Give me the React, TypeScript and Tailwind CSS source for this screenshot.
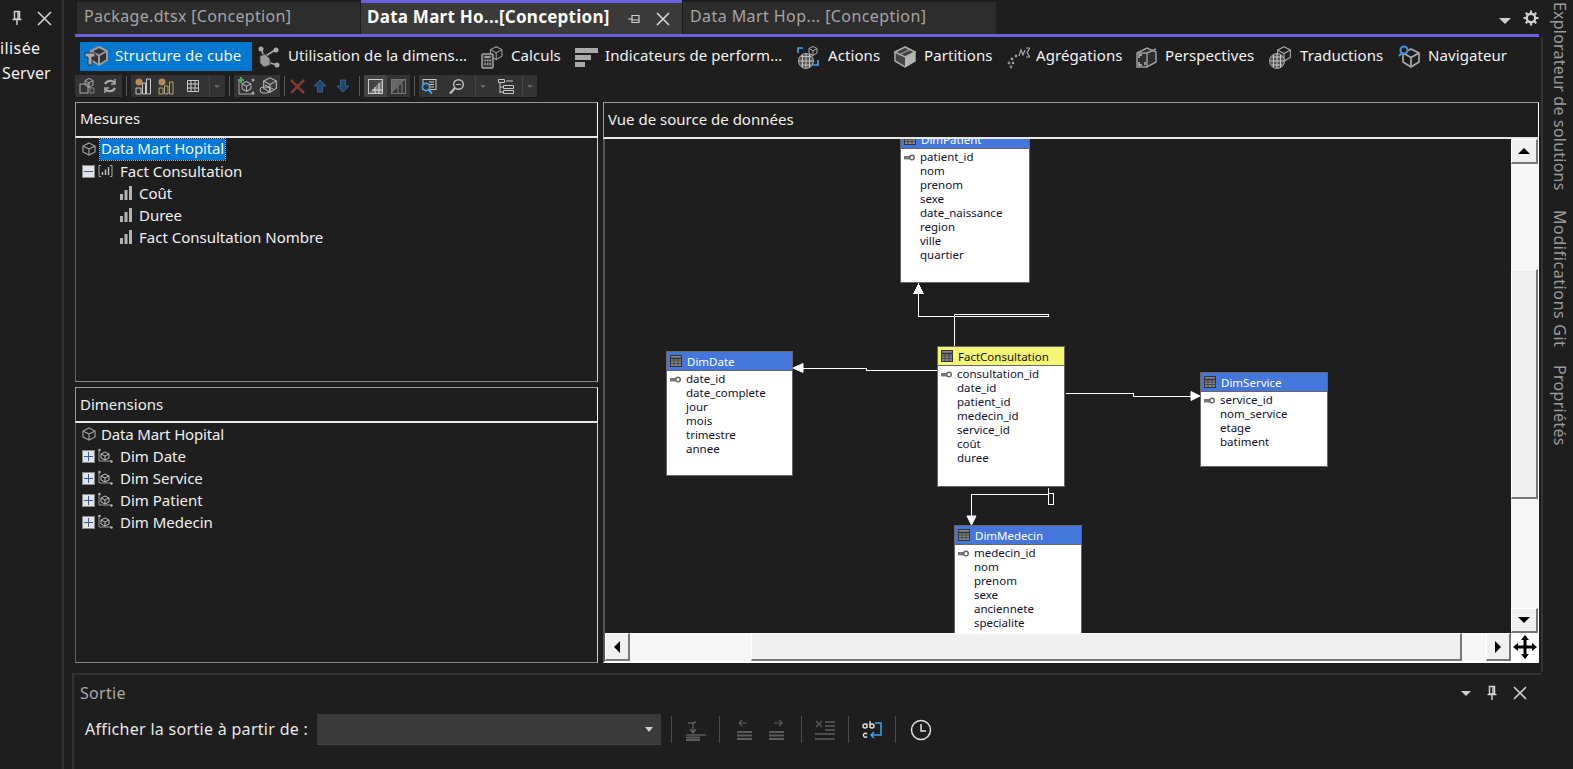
import React from "react";

const ui = "font-['Noto_Sans',sans-serif]";

function S({ w = 24, h = 24, vb, children, className = "" }: { w?: number; h?: number; vb?: string; children: React.ReactNode; className?: string }) {
  return (
    <svg width={w} height={h} viewBox={vb ?? `0 0 ${w} ${h}`} fill="none" className={`shrink-0 ${className}`}>
      {children}
    </svg>
  );
}

const G = "#a9a9a9";

function Cube({ x = 0, y = 0, s = 1, fill = "none", c = G, sw = 1.4 }: { x?: number; y?: number; s?: number; fill?: string; c?: string; sw?: number }) {
  return (
    <g transform={`translate(${x} ${y}) scale(${s})`} stroke={c} strokeWidth={sw} strokeLinejoin="round">
      <path d="M10 1 L18 5 V14 L10 19 L2 14 V5 Z" fill={fill} />
      <path d="M2 5 L10 9.5 L18 5 M10 9.5 V19" />
    </g>
  );
}

const navIcons: React.ReactNode[] = [
  <S key="0">
    <Cube x={5} y={1} s={1} c="#9b9b9b" sw={2} fill="#333" />
    <path d="M1 8 H11 V12 H8 V20 H4 V12 H1 Z" fill="#aaa" stroke="#333" />
  </S>,
  <S key="1">
    <path d="M7 12 L18 5 M10 17 L20 20 M7 12 L4 3" stroke="#aaa" strokeWidth="1.5" />
    <circle cx="4" cy="4" r="2.5" fill="#aaa" />
    <circle cx="19" cy="5" r="2.5" fill="#aaa" />
    <circle cx="20" cy="20" r="2.5" fill="#aaa" />
    <path d="M3 11 L8 9 L13 14 V20 L7 22 L3 18 Z" fill="#9a9a9a" stroke="#444" />
  </S>,
  <S key="2">
    <Cube x={9} y={1} s={0.72} />
    <rect x="2" y="9" width="11" height="14" rx="1" fill="#3a3a3a" stroke="#a5a5a5" strokeWidth="1.5" />
    <path d="M4.5 12 H10.5 M4.5 15.5 H6 M7 15.5 H8.5 M9.5 15.5 H11 M4.5 19 H6 M7 19 H8.5 M9.5 19 H11" stroke="#bbb" strokeWidth="1.4" />
  </S>,
  <S key="3">
    <rect x="1" y="3" width="23" height="5" fill="#aaa" />
    <rect x="1" y="10" width="16" height="5" fill="#aaa" />
    <rect x="1" y="17" width="10" height="5" fill="#aaa" />
  </S>,
  <S key="4">
    <circle cx="10" cy="16" r="7.5" fill="#555" stroke="#aaa" />
    <path d="M3 16 H17 M10 8 V23 M5 11.5 H15 M5 20 H15 M6.5 9.5 V22.5 M13.5 9.5 V22.5" stroke="#c0c0c0" />
    <Cube x={12} y={1} s={0.5} sw={2} />
    <path d="M2 8 V3 H7 M22 15 V20 H17" stroke="#4a9ee8" strokeWidth="1.7" />
  </S>,
  <S key="5">
    <path d="M12 2 L22 7 V16 L12 22 L2 16 V7 Z" fill="#444" stroke="#aaa" strokeWidth="1.5" />
    <path d="M2 7 L12 12 L22 7 L12 2 Z" fill="#444" stroke="#aaa" strokeWidth="1.5" />
    <path d="M12 12 L22 7 V16 L12 22 Z" fill="#b5b5b5" />
    <path d="M7 9.5 L17 4.5" stroke="#aaa" />
  </S>,
  <S key="6">
    <path d="M13 11 L15 5 L17 10 L19 5 M20 3 H24 L21 7.5 L24 12 H20" stroke="#aaa" strokeWidth="1.2" />
    <circle cx="10" cy="11" r="1.4" fill="#999" />
    <circle cx="6" cy="14" r="1.4" fill="#999" />
    <circle cx="3" cy="18" r="1.4" fill="#888" />
    <circle cx="5" cy="22" r="1.4" fill="#888" />
    <circle cx="7" cy="18" r="1.2" fill="#aaa" />
  </S>,
  <S key="7">
    <path d="M3 8 L13 3 L22 7 V17 L13 22 H3 Z" fill="#2e2e2e" stroke="#9c9c9c" strokeWidth="1.5" />
    <path d="M3 8 H13 V22 M13 8 L22 4" stroke="#9c9c9c" strokeWidth="1.4" />
    <path d="M5 13 V10 H8 M11 10 H11 M5 17 V20 H8 M11 20 V17" stroke="#c0c0c0" strokeWidth="1.4" />
  </S>,
  <S key="8">
    <Cube x={8} y={1} s={0.8} />
    <circle cx="9" cy="16" r="7.5" fill="#555" stroke="#aaa" />
    <path d="M2 16 H16 M9 8.5 V23 M4 12 H14 M4 20 H14 M5.5 9.5 V22.5 M12.5 9.5 V22.5" stroke="#c4c4c4" />
  </S>,
  <S key="9">
    <Cube x={3} y={3} s={1} sw={1.7} />
    <circle cx="6" cy="5" r="3.5" stroke="#4a90d9" strokeWidth="2" fill="#1e1e1e" />
    <path d="M3.5 8 L1 11" stroke="#4a90d9" strokeWidth="2" />
  </S>,
];

const navItems = [
  { t: "Structure de cube", c: "w-[172px] pl-[4px] gap-[7px] bg-[#0078d0] ml-[8px]" },
  { t: "Utilisation de la dimens...", c: "w-[228px] pl-[5px] gap-[7px]" },
  { t: "Calculs", c: "w-[94px] gap-[7px]" },
  { t: "Indicateurs de perform...", c: "w-[222px] gap-[7px]" },
  { t: "Actions", c: "w-[97px] gap-[8px]" },
  { t: "Partitions", c: "w-[113px] gap-[7px]" },
  { t: "Agrégations", c: "w-[128px] gap-[6px]" },
  { t: "Perspectives", c: "w-[134px] gap-[7px]" },
  { t: "Traductions", c: "w-[130px] gap-[8px]" },
  { t: "Navigateur", c: "w-[110px] gap-[6px]" },
];

function Sep({ c = "mx-[4px]" }: { c?: string }) {
  return <div className={`w-px h-[20px] bg-[#5a5a5a] ${c}`} />;
}

function TB({ children, c = "w-[23px]" }: { children: React.ReactNode; c?: string }) {
  return <div className={`h-[22px] flex items-center justify-center ${c}`}>{children}</div>;
}

function Chevron() {
  return (
    <div className="w-[14px] h-[22px] flex items-center justify-center border-l border-[#444]">
      <div className="w-0 h-0 border-x-[3px] border-x-transparent border-t-[3px] border-t-[#666]" />
    </div>
  );
}

function ToolRow() {
  return (
    <div className="flex items-center h-[22px] mt-[4px] ml-[3px]">
      <div className="flex bg-[#333333] w-[47px]">
        <TB>
          <S w={16} h={16}>
            <Cube x={5} y={0} s={0.5} sw={2} />
            <rect x="1" y="6" width="8" height="9" stroke="#aaa" />
            <path d="M11 10 H15 V15 H11 Z" stroke="#888" />
          </S>
        </TB>
        <TB>
          <S w={16} h={16}>
            <path d="M3 6 A6 6 0 0 1 13 5 M13 10 A6 6 0 0 1 3 11" stroke="#aaa" strokeWidth="2.2" />
            <path d="M13 1 V6 H9 M3 15 V10 H7" stroke="#aaa" strokeWidth="1.4" />
          </S>
        </TB>
      </div>
      <Sep />
      <div className="flex bg-[#333333] w-[94px]">
        <TB>
          <S w={18} h={18}>
            <circle cx="5" cy="5" r="3.5" fill="#d9a05c" opacity=".8" />
            <path d="M2 11 H7 V17 H2 Z M8.5 6 H11.5 V17 H8.5 Z M12.5 2 H16.5 V17 H12.5 Z" stroke="#c8c8c8" />
          </S>
        </TB>
        <TB>
          <S w={18} h={18}>
            <circle cx="5" cy="5" r="3.5" fill="#d9a05c" opacity=".8" />
            <path d="M2 11 H6 V17 H2 Z M7.5 9 H11 V17 H7.5 Z M12.5 5 H16 V17 H12.5 Z" stroke="#b5a878" />
          </S>
        </TB>
        <TB c="w-[32px]">
          <S w={14} h={14}>
            <path d="M1.5 1.5 H12.5 V12.5 H1.5 Z M5 1.5 V12.5 M9 1.5 V12.5 M1.5 5 H12.5 M1.5 9 H12.5" stroke="#ccc" />
          </S>
        </TB>
        <Chevron />
      </div>
      <Sep />
      <div className="flex bg-[#333333] w-[46px]">
        <TB>
          <S w={20} h={20}>
            <path d="M3 4 V18 H18" stroke="#aaa" />
            <Cube x={5} y={5} s={0.55} sw={2} />
            <path d="M5 1 V7 M2 4 H8" stroke="#4cb050" strokeWidth="2" />
            <circle cx="17" cy="4" r="1.5" fill="#aaa" />
            <circle cx="17" cy="17" r="1.5" fill="#aaa" />
          </S>
        </TB>
        <TB>
          <S w={20} h={20}>
            <Cube x={3} y={1} s={0.8} sw={1.5} fill="#3a3a3a" />
            <rect x="1" y="11" width="10" height="6" rx="3" stroke="#bbb" />
            <path d="M6 9 L14 13" stroke="#bbb" />
          </S>
        </TB>
      </div>
      <Sep />
      <div className="flex w-[66px]">
        <TB c="w-[16px]">
          <S w={17} h={17}>
            <path d="M2 2 L15 15 M15 2 L2 15" stroke="#7a3a32" strokeWidth="2.6" />
          </S>
        </TB>
        <TB c="w-[30px]">
          <S w={14} h={14}>
            <path d="M7 1 L13 7 H9.5 V13 H4.5 V7 H1 Z" fill="#23466b" stroke="#355f8c" />
          </S>
        </TB>
        <TB c="w-[16px]">
          <S w={14} h={14}>
            <path d="M7 13 L13 7 H9.5 V1 H4.5 V7 H1 Z" fill="#23466b" stroke="#355f8c" />
          </S>
        </TB>
      </div>
      <Sep />
      <div className="flex w-[46px] bg-[#333333]">
        <TB c="w-[23px] bg-[#444444]">
          <S w={15} h={15}>
            <rect x="0.5" y="0.5" width="14" height="14" stroke="#ccc" />
            <path d="M1 14 L14 1 V14 Z" fill="#777" />
            <path d="M7 14 V8 M11 14 V4 M4 11 H14" stroke="#ddd" />
          </S>
        </TB>
        <TB>
          <S w={15} h={15}>
            <rect x="0.5" y="0.5" width="14" height="14" stroke="#777" />
            <path d="M1 14 L14 1 H1 Z" fill="#666" />
            <path d="M7 14 V8 M11 14 V4" stroke="#888" />
          </S>
        </TB>
      </div>
      <Sep />
      <div className="flex w-[118px] bg-[#333333]">
        <TB c="w-[18px]">
          <S w={17} h={17}>
            <rect x="3" y="1.5" width="13" height="10" stroke="#c8c8c8" />
            <path d="M9 4 H14 M9 6.5 H14 M9 9 H14" stroke="#c8c8c8" />
            <circle cx="6" cy="9" r="3.6" fill="#333" stroke="#4aa3e8" strokeWidth="1.6" />
            <path d="M8.5 11.5 L12 15.5" stroke="#4aa3e8" strokeWidth="2" />
          </S>
        </TB>
        <TB c="w-[38px]">
          <S w={17} h={17}>
            <circle cx="10.5" cy="6.5" r="4.8" stroke="#c0c0c0" strokeWidth="1.4" />
            <path d="M8 6.5 H13" stroke="#c0c0c0" />
            <path d="M7 10 L2 15.5" stroke="#c0c0c0" strokeWidth="2.2" />
          </S>
        </TB>
        <Chevron />
        <TB c="w-[33px]">
          <S w={18} h={17}>
            <path d="M1.5 1.5 H7.5 V4.5 H1.5 Z M3 5 V15 M3 9 H6 M3 14 H6 M6.5 7.5 H16.5 V10.5 H6.5 Z M6.5 12.5 H16.5 V15.5 H6.5 Z M9 3 H16" stroke="#c8c8c8" />
          </S>
        </TB>
        <Chevron />
      </div>
    </div>
  );
}

function Box({ plus }: { plus: boolean }) {
  return (
    <div className="w-[13px] h-[13px] bg-[#e4e4e4] border border-[#888] flex items-center justify-center relative shrink-0">
      <div className="w-[9px] h-px bg-[#3b5a9a]" />
      {plus && <div className="absolute left-[5px] top-[1px] w-px h-[9px] bg-[#3b5a9a]" />}
    </div>
  );
}

function RootIcon() {
  return (
    <S w={14} h={14}>
      <path d="M7 1 L13 4 V10 L7 13 L1 10 V4 Z M1 4 L7 7 L13 4 M7 7 V13" stroke="#a0a0a0" strokeWidth="1.2" />
    </S>
  );
}

function GroupIcon() {
  return (
    <S w={15} h={14}>
      <path d="M3 1.5 H1 V12.5 H3 M12 1.5 H14 V12.5 H12" stroke="#aaa" />
      <path d="M4.5 8 V11 M7.5 5.5 V11 M10.5 3 V11" stroke="#bbb" strokeWidth="1.5" />
    </S>
  );
}

function MeasureIcon() {
  return (
    <S w={12} h={14}>
      <rect x="0" y="8" width="3" height="6" fill="#b3b3b3" />
      <rect x="4.5" y="4" width="3" height="10" fill="#b3b3b3" />
      <rect x="9" y="0" width="3" height="14" fill="#b3b3b3" />
    </S>
  );
}

function DimIcon() {
  return (
    <S w={16} h={16}>
      <path d="M2 2 V13 H14" stroke="#999" />
      <circle cx="2.5" cy="2" r="1.2" fill="#bbb" />
      <circle cx="14.5" cy="13.5" r="1.2" fill="#bbb" />
      <path d="M8 4 L12 6 V10 L8 12 L4 10 V6 Z M4 6 L8 8 L12 6 M8 8 V12" stroke="#c0c0c0" />
    </S>
  );
}

const rowText = "text-[15px] leading-[22px] text-[#f0f0f0] whitespace-nowrap";

function PanelHeader({ t, c }: { t: string; c: string }) {
  return (
    <div className={`flex items-center pl-[4px] border-t border-l border-t-[#9a9a9a] border-l-[#9a9a9a] border-r border-r-white border-b-2 border-b-[#e8e8e8] text-[15px] text-[#f0f0f0] ${c}`}>
      {t}
    </div>
  );
}

function TableIcon() {
  return (
    <S w={12} h={12}>
      <rect x="0.5" y="0.5" width="11" height="11" fill="#888" stroke="#333" />
      <path d="M1 3.5 H11" stroke="#333" strokeWidth="1.6" />
      <path d="M1 6 H11 M1 8.5 H11 M4 3 V11 M8 3 V11" stroke="#333" strokeWidth=".7" />
    </S>
  );
}

function Key() {
  return (
    <S w={11} h={7} className="absolute left-[3px] top-[4px]">
      <rect x="0" y="2" width="7" height="3.4" fill="#777" />
      <circle cx="8" cy="3.5" r="2.3" fill="#fff" stroke="#666" strokeWidth="1.5" />
    </S>
  );
}

function Table({ name, rows, c, fact }: { name: string; rows: string[]; c: string; fact?: boolean }) {
  return (
    <div className={`absolute bg-white border border-[#666] font-['Noto_Sans',sans-serif] text-[11.5px] overflow-hidden ${c}`}>
      <div className={`h-[18px] flex items-center gap-[5px] pl-[3px] border-b border-[#666] box-content ${fact ? "bg-[#f5f576] text-[#111]" : "bg-[#4476dc] text-white"}`}>
        <TableIcon />
        <span className="leading-[18px] pt-[1px]">{name}</span>
      </div>
      <div className="pt-[1px] relative">
        {rows.map((r, i) => (
          <div key={r} className="h-[14px] leading-[14px] pl-[19px] text-[#101030] relative">
            {i === 0 && <Key />}
            {r}
          </div>
        ))}
      </div>
    </div>
  );
}

function ScrollBtn({ c, children }: { c: string; children: React.ReactNode }) {
  return (
    <div className={`bg-[#f0f0f0] border-t border-l border-t-white border-l-white border-r-2 border-b-2 border-r-[#777] border-b-[#777] flex items-center justify-center shrink-0 ${c}`}>
      {children}
    </div>
  );
}

function Connectors() {
  return (
    <svg width="906" height="494" className="absolute left-0 top-0" fill="none" stroke="white" shapeRendering="crispEdges">
      <path d="M313.5 154 V177.5 H443.5 V175 H349.5 V207" />
      <path d="M313.5 145 L309 154 H318 Z" fill="white" />
      <path d="M332 231.5 H261 V229 H198" />
      <path d="M188 229 L198 224.5 V233.5 Z" fill="white" stroke="white" shapeRendering="auto" />
      <path d="M461 254.5 H528 V257 H586" />
      <path d="M595 257 L586 252.5 V261.5 Z" fill="white" shapeRendering="auto" />
      <path d="M443.5 349 V355 M443.5 355 H366.5 V377 M443.5 354.5 H448.5 V365.5 H443.5 V354.5" />
      <path d="M366.5 386 L362 377 H371 Z" fill="white" shapeRendering="auto" />
    </svg>
  );
}

function Arrow({ d }: { d: "up" | "down" | "left" | "right" }) {
  const cls =
    d === "up"
      ? "border-x-[6px] border-x-transparent border-b-[6px] border-b-black"
      : d === "down"
        ? "border-x-[6px] border-x-transparent border-t-[6px] border-t-black"
        : d === "left"
          ? "border-y-[6px] border-y-transparent border-r-[6px] border-r-black"
          : "border-y-[6px] border-y-transparent border-l-[6px] border-l-black";
  return <div className={`w-0 h-0 ${cls}`} />;
}

function Pin({ c = "#d0d0d0" }: { c?: string }) {
  return (
    <S w={14} h={16}>
      <path d="M4.5 1.5 H9.5 V9 H4.5 Z M2.5 9.5 H11.5 M7 10 V15" stroke={c} strokeWidth="1.5" />
      <path d="M8 2 V9" stroke={c} strokeWidth="1.5" />
    </S>
  );
}

function Close({ c = "#d0d0d0", s = 14 }: { c?: string; s?: number }) {
  return (
    <S w={s} h={s}>
      <path d={`M1 1 L${s - 1} ${s - 1} M${s - 1} 1 L1 ${s - 1}`} stroke={c} strokeWidth="1.6" />
    </S>
  );
}

export default function App() {
  return (
    <div className={`w-[1573px] h-[769px] bg-[#1e1e1e] flex overflow-hidden relative ${ui}`}>
      {/* Left collapsed panel */}
      <div className="w-[62px] shrink-0 overflow-hidden pt-[10px]">
        <div className="flex items-center h-[16px] pl-[10px] gap-[13px]">
          <Pin />
          <Close s={15} />
        </div>
        <div className="text-[16px] text-[#f0f0f0] leading-[25px] mt-[10px] whitespace-nowrap">
          <div className="tracking-[0.4px]">ilisée</div>
          <div className="ml-[2px] tracking-[0.1px]">Server</div>
        </div>
      </div>
      <div className="w-[2px] shrink-0 bg-[#333333]" />
      <div className="w-[8px] shrink-0" />

      {/* Center */}
      <div className="w-[1469px] shrink-0 flex flex-col">
        {/* Tabs */}
        <div className="h-[34px] flex pl-[5px] relative text-[16px] shrink-0">
          <div className="w-[283px] mt-[2px] h-[32px] bg-[#2d2d2d] text-[#a5a5a5] flex items-center pl-[7px] pb-[4px] tracking-[0.33px] whitespace-nowrap">Package.dtsx [Conception]</div>
          <div className="w-[321px] ml-[1px] bg-[#3a3a3a] border-t-[3px] border-[#6b5fe0] flex items-center pl-[6px] font-bold text-white gap-[15px]">
            <span className="w-[245px] whitespace-nowrap text-[17px] tracking-[0.25px] pb-[4px]">Data Mart Ho...[Conception]</span>
            <S w={14} h={14}>
              <path d="M1 7 H5 M5 3 V11 M5 3.5 H12 V10.5 H5 M5 8 H12" stroke="#d0d0d0" strokeWidth="1.2" />
            </S>
            <Close c="#d8d8d8" />
          </div>
          <div className="w-[313px] ml-[1px] mt-[2px] h-[32px] bg-[#2d2d2d] text-[#a5a5a5] flex items-center pl-[7px] pb-[4px] tracking-[0.42px] whitespace-nowrap">Data Mart Hop... [Conception]</div>
          <div className="flex-1 flex items-center justify-end gap-[12px] pr-[2px] pt-[2px]">
            <div className="w-0 h-0 mt-[6px] border-x-[6px] border-x-transparent border-t-[6px] border-t-[#d0d0d0]" />
            <S w={16} h={16}>
              <circle cx="8" cy="8" r="4.2" stroke="#d0d0d0" strokeWidth="2.4" />
              <path d="M8 0.5 V3.5 M8 12.5 V15.5 M0.5 8 H3.5 M12.5 8 H15.5 M2.7 2.7 L4.8 4.8 M11.2 11.2 L13.3 13.3 M13.3 2.7 L11.2 4.8 M4.8 11.2 L2.7 13.3" stroke="#d0d0d0" strokeWidth="2.2" />
            </S>
          </div>
        </div>
        <div className="h-[3px] ml-[3px] mr-[2px] bg-[#6b5fe0] shrink-0" />

        {/* Nav */}
        <div className="flex items-center h-[29px] mt-[5px] text-[15px] text-[#f2f2f2] tracking-[0.08px] whitespace-nowrap shrink-0">
          {navItems.map((n, i) => (
            <div key={n.t} className={`h-[29px] flex items-center shrink-0 ${n.c}`}>
              {navIcons[i]}
              <span className="pb-[3px]">{n.t}</span>
            </div>
          ))}
        </div>

        <ToolRow />

        {/* Panels */}
        <div className="flex gap-[5px] ml-[3px] mr-[2px] mt-[5px] h-[561px] shrink-0">
          <div className="w-[523px] flex flex-col gap-[5px]">
            <div className="h-[280px] flex flex-col">
              <PanelHeader t="Mesures" c="h-[36px] pb-[2px]" />
              <div className="flex-1 border-l border-b border-r border-l-[#666] border-b-[#888] border-r-[#cfcfcf] pl-[6px]">
                <div className="flex items-center h-[22px]">
                  <RootIcon />
                  <span className="ml-[4px] h-[21px] pl-[1px] pr-[1px] bg-[#0078d7] outline-1 outline-dotted outline-[#e8a060] text-[15px] tracking-[-0.15px] leading-[19px] text-[#f5f5f5] whitespace-nowrap">Data Mart Hopital</span>
                </div>
                <div className={`flex items-center h-[22px] ${rowText}`}>
                  <Box plus={false} />
                  <span className="ml-[3px]"><GroupIcon /></span>
                  <span className="ml-[7px]">Fact Consultation</span>
                </div>
                {["Coût", "Duree", "Fact Consultation Nombre"].map((t) => (
                  <div key={t} className={`flex items-center h-[22px] pl-[38px] gap-[7px] ${rowText}`}>
                    <MeasureIcon />
                    <span>{t}</span>
                  </div>
                ))}
              </div>
            </div>
            <div className="flex-1 flex flex-col">
              <PanelHeader t="Dimensions" c="h-[36px]" />
              <div className="flex-1 border-l border-b border-r border-l-[#666] border-b-[#888] border-r-[#cfcfcf] pl-[6px]">
                <div className={`flex items-center h-[22px] ${rowText}`}>
                  <RootIcon />
                  <span className="ml-[5px] tracking-[-0.15px]">Data Mart Hopital</span>
                </div>
                {["Dim Date", "Dim Service", "Dim Patient", "Dim Medecin"].map((t) => (
                  <div key={t} className={`flex items-center h-[22px] ${rowText}`}>
                    <Box plus />
                    <span className="ml-[2px]"><DimIcon /></span>
                    <span className="ml-[7px]">{t}</span>
                  </div>
                ))}
              </div>
            </div>
          </div>

          <div className="w-[936px] flex flex-col">
            <PanelHeader t="Vue de source de données" c="h-[37px] pb-[2px]" />
            <div className="flex-1 border-l-2 border-l-[#555] border-r border-r-white border-b-2 border-b-white grid grid-cols-[1fr_27px] grid-rows-[494px_1fr] min-h-0">
              <div className="relative overflow-hidden bg-[#1e1e1e]">
                <Connectors />
                <Table name="DimPatient" c="left-[295px] top-[-10px] w-[130px] h-[154px]" rows={["patient_id", "nom", "prenom", "sexe", "date_naissance", "region", "ville", "quartier"]} />
                <Table name="FactConsultation" fact c="left-[332px] top-[207px] w-[128px] h-[141px]" rows={["consultation_id", "date_id", "patient_id", "medecin_id", "service_id", "coût", "duree"]} />
                <Table name="DimDate" c="left-[61px] top-[212px] w-[127px] h-[125px]" rows={["date_id", "date_complete", "jour", "mois", "trimestre", "annee"]} />
                <Table name="DimService" c="left-[595px] top-[233px] w-[128px] h-[95px]" rows={["service_id", "nom_service", "etage", "batiment"]} />
                <Table name="DimMedecin" c="left-[349px] top-[386px] w-[128px] h-[130px]" rows={["medecin_id", "nom", "prenom", "sexe", "anciennete", "specialite"]} />
              </div>
              <div className="bg-[#f6f6f6] flex flex-col">
                <ScrollBtn c="h-[25px]"><Arrow d="up" /></ScrollBtn>
                <div className="h-[105px]" />
                <div className="h-[230px] bg-[#f0f0f0] border-t border-l border-t-[#fff] border-l-[#fff] border-r-2 border-b-2 border-r-[#777] border-b-[#777]" />
                <div className="flex-1" />
                <ScrollBtn c="h-[25px]"><Arrow d="down" /></ScrollBtn>
              </div>
              <div className="bg-[#f6f6f6] flex">
                <ScrollBtn c="w-[25px]"><Arrow d="left" /></ScrollBtn>
                <div className="w-[121px]" />
                <div className="w-[711px] bg-[#f0f0f0] border-t border-l border-t-[#fff] border-l-[#fff] border-r-2 border-b-2 border-r-[#777] border-b-[#777]" />
                <div className="flex-1" />
                <ScrollBtn c="w-[25px]"><Arrow d="right" /></ScrollBtn>
              </div>
              <div className="bg-white flex items-center justify-center">
                <S w={26} h={26}>
                  <path d="M13 1 L17 6 H14.5 V11.5 H20 V9 L25 13 L20 17 V14.5 H14.5 V20 H17 L13 25 L9 20 H11.5 V14.5 H6 V17 L1 13 L6 9 V11.5 H11.5 V6 H9 Z" fill="black" />
                </S>
              </div>
            </div>
          </div>
        </div>

        {/* Output */}
        <div className="mt-[10px] flex-1 border-t-2 border-l-2 border-[#333333] relative">
          <div className="flex items-center h-[36px] pl-[6px] pr-[14px] text-[16px] text-[#a8a8a8]">
            <span className="tracking-[0.3px]">Sortie</span>
            <div className="flex-1" />
            <div className="flex items-center gap-[14px]">
              <div className="w-0 h-0 border-x-[5px] border-x-transparent border-t-[5px] border-t-[#d0d0d0]" />
              <Pin />
              <Close />
            </div>
          </div>
          <div className="flex items-center h-[31px] mt-[3px] pl-[11px]">
            <span className="w-[232px] text-[16px] tracking-[0.3px] pb-[2px] text-[#e8e8e8] whitespace-nowrap">Afficher la sortie à partir de :</span>
            <div className="w-[344px] h-[31px] bg-[#3a3a3a] border-b border-[#444] flex items-center justify-end pr-[8px]">
              <div className="w-0 h-0 border-x-[4px] border-x-transparent border-t-[5px] border-t-[#ccc]" />
            </div>
            <div className="w-px h-[27px] bg-[#4a4a4a] ml-[10px]" />
            <div className="w-[47px] flex justify-center">
              <S w={24} h={24}>
                <path d="M4 5 H11 M12 4 A3 3 0 0 0 9 7 V14 M6 11 L9 15 L12 11 M2 17 H22" stroke="#5c5c5c" strokeWidth="1.4" />
                <path d="M2 19.5 H16 M2 22 H16" stroke="#5c5c5c" strokeWidth="2" />
              </S>
            </div>
            <div className="w-px h-[27px] bg-[#4a4a4a]" />
            <div className="w-[81px] flex justify-center gap-[13px]">
              <S w={20} h={24}>
                <path d="M13 5 H5 M8 2 L5 5 L8 8" stroke="#5c5c5c" strokeWidth="1.2" />
                <path d="M3 14 H18 M3 17.5 H18 M3 21 H18" stroke="#5c5c5c" strokeWidth="2" />
              </S>
              <S w={20} h={24}>
                <path d="M7 5 H15 M12 2 L15 5 L12 8" stroke="#5c5c5c" strokeWidth="1.2" />
                <path d="M2 14 H17 M2 17.5 H17 M2 21 H17" stroke="#5c5c5c" strokeWidth="2" />
              </S>
            </div>
            <div className="w-px h-[27px] bg-[#4a4a4a]" />
            <div className="w-[46px] flex justify-center">
              <S w={24} h={24}>
                <path d="M3 3 L9 9 M9 3 L3 9" stroke="#5c5c5c" strokeWidth="1.2" />
                <path d="M12 4 H22 M12 8 H22 M12 12 H22 M2 16 H22 M2 21 H22" stroke="#5c5c5c" strokeWidth="1.6" />
              </S>
            </div>
            <div className="w-px h-[27px] bg-[#4a4a4a]" />
            <div className="w-[46px] flex justify-center">
              <S w={24} h={24}>
                <path d="M3 8 A2 2 0 1 0 7 8 A2 2 0 1 0 3 8 M7 5.5 V10 M10 3 V10 M10 8 A2 2 0 1 0 14 8 A2 2 0 1 0 10 8 M7 16 A2 2 0 1 0 7 18.5" stroke="#e0e0e0" strokeWidth="1.4" />
                <path d="M15 5 H21 V17 H11 M14 14 L11 17 L14 20" stroke="#3fa0f0" strokeWidth="1.5" />
              </S>
            </div>
            <div className="w-px h-[27px] bg-[#4a4a4a]" />
            <div className="w-[50px] flex justify-center">
              <S w={22} h={22}>
                <circle cx="11" cy="11" r="9.5" stroke="#e0e0e0" strokeWidth="1.5" />
                <path d="M11 5 V12 H16" stroke="#e0e0e0" strokeWidth="1.5" />
              </S>
            </div>
          </div>
        </div>
      </div>
      <div className="w-[2px] shrink-0 bg-[#333333] mt-[37px] h-[635px]" />

      {/* Right strip */}
      <div className="flex-1 flex flex-col items-center pt-[2px] pl-[4px] text-[16px] text-[#9a9a9a] whitespace-nowrap leading-[20px]">
        <span className="[writing-mode:vertical-rl] tracking-[0.22px]">Explorateur de solutions</span>
        <span className="[writing-mode:vertical-rl] tracking-[0.6px] mt-[19px]">Modifications Git</span>
        <span className="[writing-mode:vertical-rl] tracking-[0.3px] mt-[18px]">Propriétés</span>
      </div>
    </div>
  );
}
